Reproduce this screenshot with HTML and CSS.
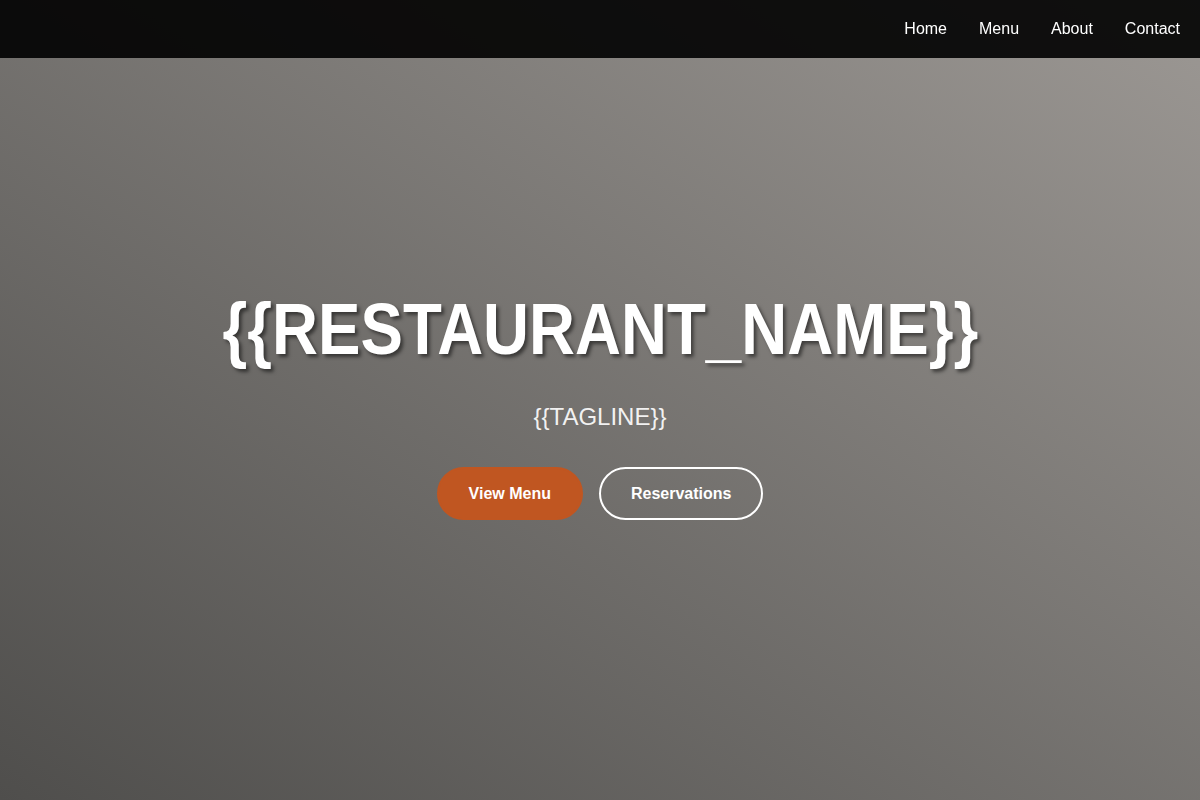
FILE: index.html
```html
<!DOCTYPE html>
<html lang="en">
<head>
<meta charset="utf-8">
<title>{{RESTAURANT_NAME}}</title>
<link rel="stylesheet" href="styles.css">
</head>
<body>
<header class="site-header">
  <nav class="nav">
    <a class="nav-link" href="#">Home</a>
    <a class="nav-link" href="#">Menu</a>
    <a class="nav-link" href="#">About</a>
    <a class="nav-link" href="#">Contact</a>
  </nav>
</header>
<main class="hero">
  <div class="hero-content">
    <h1 class="hero-title">{{RESTAURANT_NAME}}</h1>
    <p class="hero-tagline">{{TAGLINE}}</p>
    <div class="hero-actions">
      <a class="btn btn-primary" href="#">View Menu</a>
      <a class="btn btn-outline" href="#">Reservations</a>
    </div>
  </div>
</main>
</body>
</html>
```

FILE: styles.css
```css
* { box-sizing: border-box; }
html, body { margin: 0; padding: 0; }
body {
  font-family: "Liberation Sans", Arial, sans-serif;
  color: #fff;
  background: #4f4e4c;
}
.site-header {
  position: fixed;
  top: 0;
  left: 0;
  right: 0;
  height: 58px;
  background: rgba(0, 0, 0, 0.9);
  display: flex;
  justify-content: flex-end;
  align-items: center;
  padding: 0 20px;
  z-index: 10;
}
.nav {
  display: flex;
  gap: 32px;
}
.nav-link {
  color: #fff;
  text-decoration: none;
  font-size: 16px;
  line-height: 18px;
}
.hero {
  min-height: 100vh;
  display: flex;
  align-items: center;
  justify-content: center;
  padding-top: 6px;
  background: linear-gradient(to top right, #4f4e4c 0%, #9c9894 100%);
  text-align: center;
}
.hero-title {
  margin: 0 0 30px;
  font-size: 72px;
  line-height: 1.2;
  font-weight: 700;
  color: #fff;
  transform: scaleX(0.884);
  text-shadow: 3px 3px 4px rgba(0, 0, 0, 0.5);
}
.hero-tagline {
  margin: 0 0 35px;
  font-size: 24px;
  line-height: 1.2;
  color: rgba(255, 255, 255, 0.92);
}
.hero-actions {
  display: flex;
  justify-content: center;
  gap: 16px;
}
.btn {
  display: inline-block;
  padding: 15px 30px;
  border: 2px solid transparent;
  border-radius: 30px;
  font-size: 16px;
  line-height: 19px;
  font-weight: 700;
  color: #fff;
  text-decoration: none;
}
.btn-primary {
  background: #c05621;
  border-color: #c05621;
}
.btn-outline {
  background: transparent;
  border-color: #fff;
}
```
